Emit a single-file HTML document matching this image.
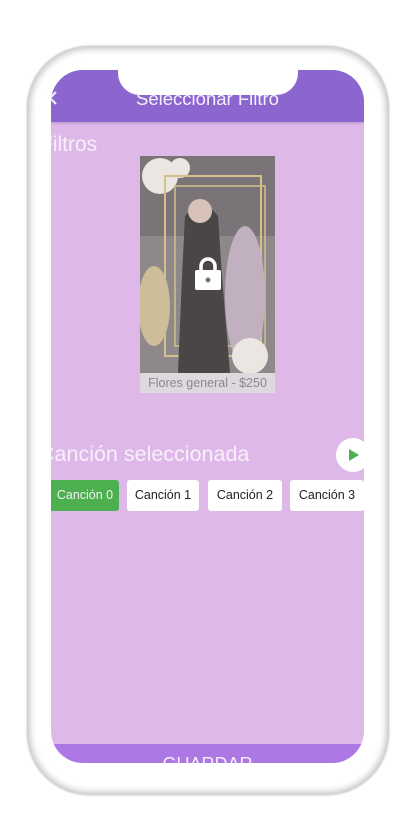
<!DOCTYPE html>
<html><head><meta charset="utf-8"><style>
*{margin:0;padding:0;box-sizing:border-box}
body{width:417px;height:834px;background:#fff;position:relative;overflow:hidden;font-family:"Liberation Sans",sans-serif}
.phone{position:absolute;left:27px;top:46px;width:362px;height:749px;border-radius:62px;background:#fff;box-shadow:inset 0 0 7px 3px #c4c4c4,0 0 2px #bbb}
.screen{position:absolute;left:51px;top:70px;width:313px;height:693px;border-radius:32px;background:#dfb8ea;overflow:hidden}
.hdr{position:absolute;left:0;top:0;width:313px;height:52px;background:#8b66cf;box-shadow:0 1px 3px rgba(0,0,0,.2)}
.hdr .t{position:absolute;left:0;right:0;top:18px;text-align:center;color:#f4effa;font-size:18.5px}
.notch{position:absolute;left:67px;top:0;width:180px;height:25px;background:#fff;border-radius:0 0 22px 22px}
.title{position:absolute;left:-11px;top:63px;color:#f6f0f8;font-size:21px}
.img{position:absolute;left:89px;top:86px;width:135px;height:237px;overflow:hidden;background:#8a8386}
.cap{position:absolute;left:0;bottom:0;width:100%;height:20px;background:#ddd9dc;color:#8a8890;font-size:12.5px;text-align:center;line-height:20px}
.sec{position:absolute;left:-12px;top:372px;color:#f6f0f8;font-size:21.5px}
.play{position:absolute;left:285px;top:368px;width:34px;height:34px;border-radius:50%;background:#fff}
.btn{position:absolute;top:410px;height:31px;border-radius:3px;background:#fff;color:#222;font-size:12.5px;line-height:31px;text-align:center}
.save{position:absolute;left:0;top:674px;width:313px;height:30px;background:#ae78e4;color:#f4effa;font-size:18px;text-align:center;padding-top:10px}
</style></head><body>
<div class="phone"></div>
<div class="screen">
 <div class="hdr"><svg style="position:absolute;left:-4px;top:20px" width="12" height="16"><path d="M9 2 L3 8 L9 14" stroke="#f4effa" stroke-width="2.2" fill="none"/></svg><div class="t">Seleccionar Filtro</div></div>
 <div class="notch"></div>
 <div class="title">Filtros</div>
 <div class="img">
  <svg width="135" height="217" viewBox="0 0 135 217">
   <rect width="135" height="217" fill="#8e888b"/>
   <rect width="135" height="80" fill="#7a7478"/>
   <circle cx="20" cy="20" r="18" fill="#ece6e2"/><circle cx="40" cy="12" r="10" fill="#ece6e2"/>
   <rect x="25" y="20" width="96" height="180" fill="none" stroke="#d3c08a" stroke-width="2"/>
   <rect x="35" y="30" width="90" height="160" fill="none" stroke="#d3c08a" stroke-width="1.5"/>
   <ellipse cx="105" cy="140" rx="20" ry="70" fill="#c0b0c0"/>
   <ellipse cx="14" cy="150" rx="16" ry="40" fill="#cdbd98"/>
   <path d="M45 60 Q62 40 78 60 L82 120 L90 217 L38 217 L42 120 Z" fill="#4a4646"/>
   <circle cx="60" cy="55" r="12" fill="#d8c2b8"/>
   <circle cx="110" cy="200" r="18" fill="#ece6e2"/>
  </svg>
  <svg style="position:absolute;left:54px;top:101px" width="28" height="34" viewBox="0 0 28 34"><path d="M7 14 V9 a7 7 0 0 1 14 0 V14" stroke="#fff" stroke-width="3.5" fill="none"/><rect x="1" y="13" width="26" height="20" rx="2" fill="#fff"/><circle cx="14" cy="23" r="2.5" fill="#777"/></svg>
  <div class="cap">Flores general - $250</div>
 </div>
 <div class="sec">Canción seleccionada</div>
 <div class="play"><svg style="position:absolute;left:12px;top:11px" width="12" height="12"><path d="M1 0 L11 6 L1 12 Z" fill="#4caf50"/></svg></div>
 <div class="btn" style="left:-8px;width:76px;background:#4caf50;color:#f2f2f2;padding-left:8px">Canción 0</div>
 <div class="btn" style="left:76px;width:72px">Canción 1</div>
 <div class="btn" style="left:157px;width:74px">Canción 2</div>
 <div class="btn" style="left:239px;width:74px">Canción 3</div>
 <div class="save">GUARDAR</div>
</div>
</body></html>
